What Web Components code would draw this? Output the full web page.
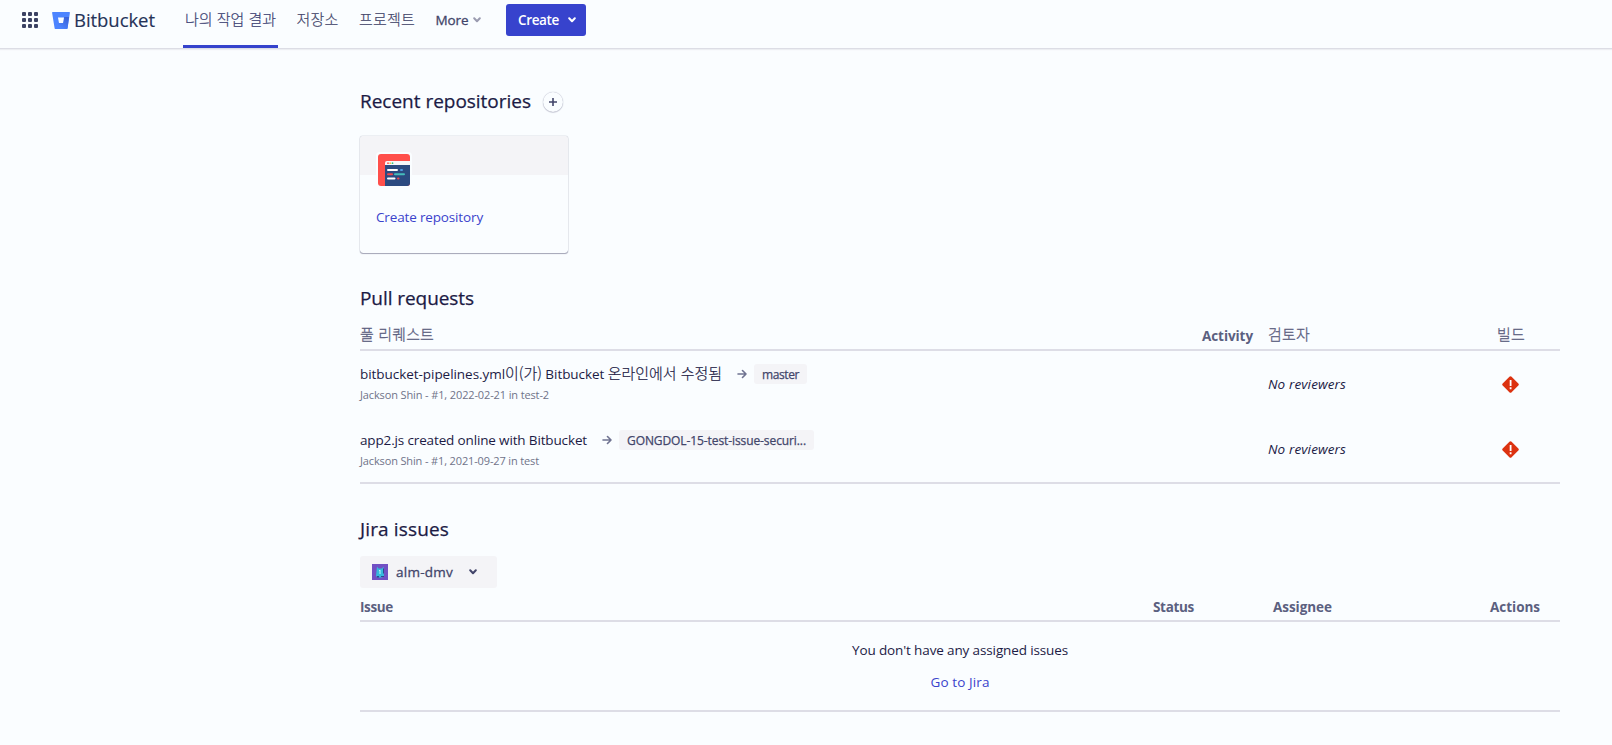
<!DOCTYPE html>
<html lang="ko">
<head>
<meta charset="utf-8">
<title>Bitbucket</title>
<style>
    body {
        margin: 0;
        min-height: 745px;
        background: #fafdff;
        color: #1c1b45;
        font: 13.5px/20px "Open Sans", "Noto Sans", "Noto Sans CJK KR", sans-serif;
        overflow: hidden;
    }
    .ko { font: 300 15px/1 "Noto Sans CJK KR", sans-serif; -webkit-text-stroke: 0.2px; }
</style>
</head>
<body>
<bb-header>
    <bb-nav-item active><ui-text w="91" ko>나의 작업 결과</ui-text></bb-nav-item>
    <bb-nav-item><ui-text w="42" ko>저장소</ui-text></bb-nav-item>
    <bb-nav-item><ui-text w="56" ko>프로젝트</ui-text></bb-nav-item>
    <bb-nav-item latin><ui-text w="33">More</ui-text><bb-chevron></bb-chevron></bb-nav-item>
    <bb-create slot="action"><ui-text w="41">Create</ui-text></bb-create>
</bb-header>
<bb-dashboard>
    <bb-section-title>
        <ui-text w="171">Recent repositories</ui-text>
        <bb-add-button></bb-add-button>
    </bb-section-title>
    <bb-repo-card><ui-text w="107">Create repository</ui-text></bb-repo-card>

    <bb-section-title style="margin-top: 33px"><ui-text w="114">Pull requests</ui-text></bb-section-title>
    <bb-table style="--head: 41px; --body: 131px; --cols: 842px 66px 229px 1fr">
        <ui-text slot="head" w="74" ko>풀 리퀘스트</ui-text>
        <ui-text slot="head" w="51">Activity</ui-text>
        <ui-text slot="head" w="42" ko>검토자</ui-text>
        <ui-text slot="head" w="28" ko>빌드</ui-text>
        <bb-pull-request>
            <ui-text slot="title" w="362">bitbucket-pipelines.yml<span class="ko">이(가)</span> Bitbucket <span class="ko">온라인에서 수정됨</span></ui-text>
            <ui-text slot="branch" w="37">master</ui-text>
            <ui-text slot="meta" w="189">Jackson Shin - #1, 2022-02-21 in test-2</ui-text>
        </bb-pull-request>
        <bb-pull-request>
            <ui-text slot="title" w="227">app2.js created online with Bitbucket</ui-text>
            <ui-text slot="branch" w="179">GONGDOL-15-test-issue-securi...</ui-text>
            <ui-text slot="meta" w="179">Jackson Shin - #1, 2021-09-27 in test</ui-text>
        </bb-pull-request>
    </bb-table>

    <bb-section-title style="margin-top: 33px"><ui-text w="89">Jira issues</ui-text></bb-section-title>
    <bb-site-select><ui-text w="57">alm-dmv</ui-text></bb-site-select>
    <bb-table style="--head: 34px; --body: 88px; --cols: 793px 120px 217px 1fr">
        <ui-text slot="head" w="33">Issue</ui-text>
        <ui-text slot="head" w="41">Status</ui-text>
        <ui-text slot="head" w="59">Assignee</ui-text>
        <ui-text slot="head" w="50">Actions</ui-text>
        <bb-empty>
            <ui-text w="216">You don't have any assigned issues</ui-text>
            <ui-text slot="link" w="59">Go to Jira</ui-text>
        </bb-empty>
    </bb-table>
</bb-dashboard>

<script>
function define(name, html, setup) {
    customElements.define(name, class extends HTMLElement {
        connectedCallback() {
            if (this.shadowRoot) return;
            this.attachShadow({ mode: 'open' });
            this.shadowRoot.innerHTML = html;
            if (setup) setup(this, this.shadowRoot);
        }
    });
}

define('bb-header', `
    <style>
        :host {
            display: flex;
            box-sizing: border-box;
            height: 49px;
            padding-left: 22px;
            border-bottom: 1px solid #dcdde5;
            box-shadow: 0 1px 1px #eceef2;
            color: #42456a;
        }
        .apps { margin: 12px 14px 0 0; fill: #3b4263; }
        .logo { margin: 12px 4px 0 0; }
        .brand { margin-top: 9px; font-size: 18.5px; line-height: 22px; color: #253358; -webkit-text-stroke: 0.15px; }
        nav { display: flex; gap: 16.5px; margin-left: 28px; }
        .action { margin: 4px 0 0 23.5px; }
    </style>
    <svg class="apps" width="16" height="16">
        <rect width="4" height="4" rx="1"/><rect x="6" width="4" height="4" rx="1"/><rect x="12" width="4" height="4" rx="1"/>
        <rect y="6" width="4" height="4" rx="1"/><rect x="6" y="6" width="4" height="4" rx="1"/><rect x="12" y="6" width="4" height="4" rx="1"/>
        <rect y="12" width="4" height="4" rx="1"/><rect x="6" y="12" width="4" height="4" rx="1"/><rect x="12" y="12" width="4" height="4" rx="1"/>
    </svg>
    <svg class="logo" width="18" height="17">
        <defs><linearGradient id="g" x1="1" y1="0.2" x2="0.4" y2="0.9"><stop stop-color="#3a62d8"/><stop offset="1" stop-color="#4c84ff"/></linearGradient></defs>
        <path fill="#4c84ff" d="M.7 0H17.3q.7 0 .6.7L15.6 16.2q-.1.8-.9.8H3.5q-.8 0-.9-.8L.1.7Q0 0 .7 0Z"/>
        <path fill="url(#g)" d="M17 5H11.8L11 11H7L2.8 16.4l.6.4H14.7q.7 0 .8-.6Z"/>
        <path fill="#fafdff" d="M6 5.4h6L11 11H7Z"/>
    </svg>
    <ui-text class="brand" w="81">Bitbucket</ui-text>
    <nav><slot></slot></nav>
    <div class="action"><slot name="action"></slot></div>
`);

define('bb-nav-item', `
    <style>
        :host {
            display: flex;
            box-sizing: border-box;
            height: 48px;
            padding: 9px 2px 0;
            -webkit-text-stroke: 0.2px;
        }
        :host([active]) { border-bottom: 3px solid #3543cc; color: #3b3f72; }
        :host([latin]) { padding-top: 10px; -webkit-text-stroke: 0.3px; }
    </style>
    <slot></slot>
`);

define('bb-chevron', `
    <style>
        :host { display: flex; align-items: center; height: 20px; margin-left: 4px; color: #9a9bb0; }
    </style>
    <svg width="8" height="6" fill="none" stroke="currentColor" stroke-width="2" stroke-linecap="round" stroke-linejoin="round"><path d="M1.2 1.3 4 4.2 6.8 1.3"/></svg>
`);

define('bb-create', `
    <style>
        :host {
            display: flex;
            align-items: center;
            width: 80px;
            height: 32px;
            box-sizing: border-box;
            padding-left: 12px;
            border-radius: 3px;
            background: #3743cd;
            color: #fff;
            font-weight: 600;
        }
        bb-chevron { color: #fff; margin-left: 9px; }
    </style>
    <slot></slot><bb-chevron></bb-chevron>
`);

define('bb-dashboard', `
    <style>
        :host { display: block; width: 1200px; margin: 40px 0 0 360px; }
    </style>
    <slot></slot>
`);

define('bb-section-title', `
    <style>
        :host { display: flex; align-items: center; height: 24px; font-size: 19px; line-height: 24px; -webkit-text-stroke: 0.25px; }
    </style>
    <slot></slot>
`);

define('bb-add-button', `
    <style>
        :host {
            display: grid;
            place-items: center;
            width: 20px;
            height: 20px;
            margin: 1px 0 0 12px;
            border-radius: 50%;
            box-shadow: 0 0 1px #9a9cb0, 0 1px 1px #d2d4de;
        }
    </style>
    <svg width="8" height="8" stroke="#42456a" stroke-width="1.6"><path d="M4 0V8M0 4H8"/></svg>
`);

define('bb-repo-card', `
    <style>
        :host {
            display: block;
            box-sizing: border-box;
            width: 208px;
            height: 117px;
            margin-top: 23px;
            border-radius: 3px;
            box-shadow: 0 0 1px #6f7189, 0 1px 1px #a9abbd;
        }
        .band { height: 39px; padding: 16px 0 0 16px; box-sizing: border-box; border-radius: 3px 3px 0 0; background: #f4f4f7; }
        .icon { display: block; overflow: visible; }
        .name { margin: 32px 0 0 16px; color: #3b43cc; }
    </style>
    <div class="band">
        <svg class="icon" width="36" height="36">
            <rect width="36" height="36" rx="4" fill="#fafdff"/>
            <rect x="2" y="2" width="32" height="32" rx="3" fill="#ff4f4b"/>
            <path fill="#2b4a80" d="M9 13H34V31q0 3-3 3H9Z"/>
            <path fill="#f6f7fa" d="M11 9H34v4H9v-2q0-2 2-2Z"/>
            <circle cx="12" cy="11.2" r=".9" fill="#ff4f4b"/><circle cx="14.2" cy="11.2" r=".9" fill="#fcc44f"/><circle cx="16.5" cy="11.2" r=".9" fill="#3cc47c"/>
            <g fill="none" stroke-width="2" stroke-linecap="round">
                <path stroke="#fff" d="M12 18H21M12 26.5H18.5"/>
                <path stroke="#4f9be0" d="M25 18h1"/>
                <path stroke="#f0474c" d="M12 22.2h4M22 26.5h.5"/>
                <path stroke="#45bdbb" d="M19 22.2h9"/>
            </g>
        </svg>
    </div>
    <div class="name"><slot></slot></div>
`);

define('bb-table', `
    <style>
        :host { display: block; }
        .head {
            display: grid;
            grid-template-columns: var(--cols);
            align-items: end;
            box-sizing: border-box;
            height: var(--head);
            padding-bottom: 3px;
            border-bottom: 2px solid #dddde6;
            color: #5b6080;
            font-weight: 700;
        }
        ::slotted([ko]) { margin-bottom: 2px; -webkit-text-stroke: 0.3px; }
        .body { height: var(--body); border-bottom: 2px solid #dddde6; }
    </style>
    <div class="head"><slot name="head"></slot></div>
    <div class="body"><slot></slot></div>
`);

define('bb-pull-request', `
    <style>
        :host { display: grid; grid-template-columns: 908px 229px 1fr; height: 66px; box-sizing: border-box; padding-top: 13px; }
        .line { display: flex; height: 20px; }
        .arrow { margin: 5px 7px 0 15px; }
        .branch {
            padding: 0 8px;
            border-radius: 3px;
            background: #f4f4f7;
            color: #42456a;
            font-size: 12px;
            line-height: 21px;
            -webkit-text-stroke: 0.25px;
        }
        .meta { margin-top: 1px; font-size: 11px; color: #6f7389; }
        .reviewers { margin-top: 10px; font-style: italic; }
        .build { margin: 12px 0 0 4.5px; }
        :host(:last-child) .reviewers { margin-top: 9px; }
        :host(:last-child) .build { margin-top: 11px; }
    </style>
    <div>
        <div class="line">
            <slot name="title"></slot>
            <svg class="arrow" width="10" height="10" fill="none" stroke="#6f7391" stroke-width="1.6" stroke-linecap="round" stroke-linejoin="round"><path d="M1 5H9M5.5 1.5 9 5 5.5 8.5"/></svg>
            <div class="branch"><slot name="branch"></slot></div>
        </div>
        <div class="meta"><slot name="meta"></slot></div>
    </div>
    <div class="reviewers"><ui-text w="78">No reviewers</ui-text></div>
    <svg class="build" width="17" height="17">
        <path fill="#dc3210" d="M7.4.7q1.1-1 2.2 0L16.3 7.4q1 1.1 0 2.2L9.6 16.3q-1.1 1-2.2 0L.7 9.6q-1-1.1 0-2.2Z"/>
        <path fill="#fff" d="M7.7 4h1.8v6H7.7ZM7.7 11.2h1.8v2H7.7Z"/>
    </svg>
`);

define('bb-site-select', `
    <style>
        :host {
            display: flex;
            align-items: center;
            box-sizing: border-box;
            width: 137px;
            height: 32px;
            margin-top: 15px;
            padding-left: 12px;
            border-radius: 3px;
            background: #f4f4f7;
            color: #42456a;
            -webkit-text-stroke: 0.3px;
        }
        svg { margin-right: 8px; }
        bb-chevron { margin-left: 16px; color: #42456a; }
    </style>
    <svg width="16" height="16">
        <rect width="16" height="16" fill="#7150c4"/>
        <path fill="#35b9dc" d="M5 2.5 6.5 4.5H10L11.5 2.5 12 12 10 13.5H6L4 12Z"/>
        <path fill="#2b4b8f" d="M5 12h2v1.5H5ZM9 12h3v1H9ZM11 4.5h1v5h-1Z"/>
        <path fill="#c6f3fa" d="M7 6h1.5v4H7.5V7H7Z"/>
    </svg>
    <slot></slot>
    <bb-chevron></bb-chevron>
`);

define('bb-empty', `
    <style>
        :host { display: flex; flex-direction: column; align-items: center; gap: 12px; padding-top: 18px; }
        .link { color: #3b43cc; }
    </style>
    <slot></slot>
    <div class="link"><slot name="link"></slot></div>
`);

// One line of text, tracked so that it fills exactly the width in "w".
define('ui-text', `
    <style>
        :host { display: block; white-space: nowrap; }
        :host([ko]) { font-size: 15px; font-weight: 300; font-family: "Noto Sans CJK KR", sans-serif; }
        span { display: inline-block; }
    </style>
    <span><slot></slot></span>
`, (host, root) => {
    const span = root.querySelector('span');
    const width = Number(host.getAttribute('w'));
    const natural = span.getBoundingClientRect().width;
    host.style.width = width + 'px';
    host.style.letterSpacing = (width - natural) / host.textContent.length + 'px';
});
</script>
</body>
</html>
